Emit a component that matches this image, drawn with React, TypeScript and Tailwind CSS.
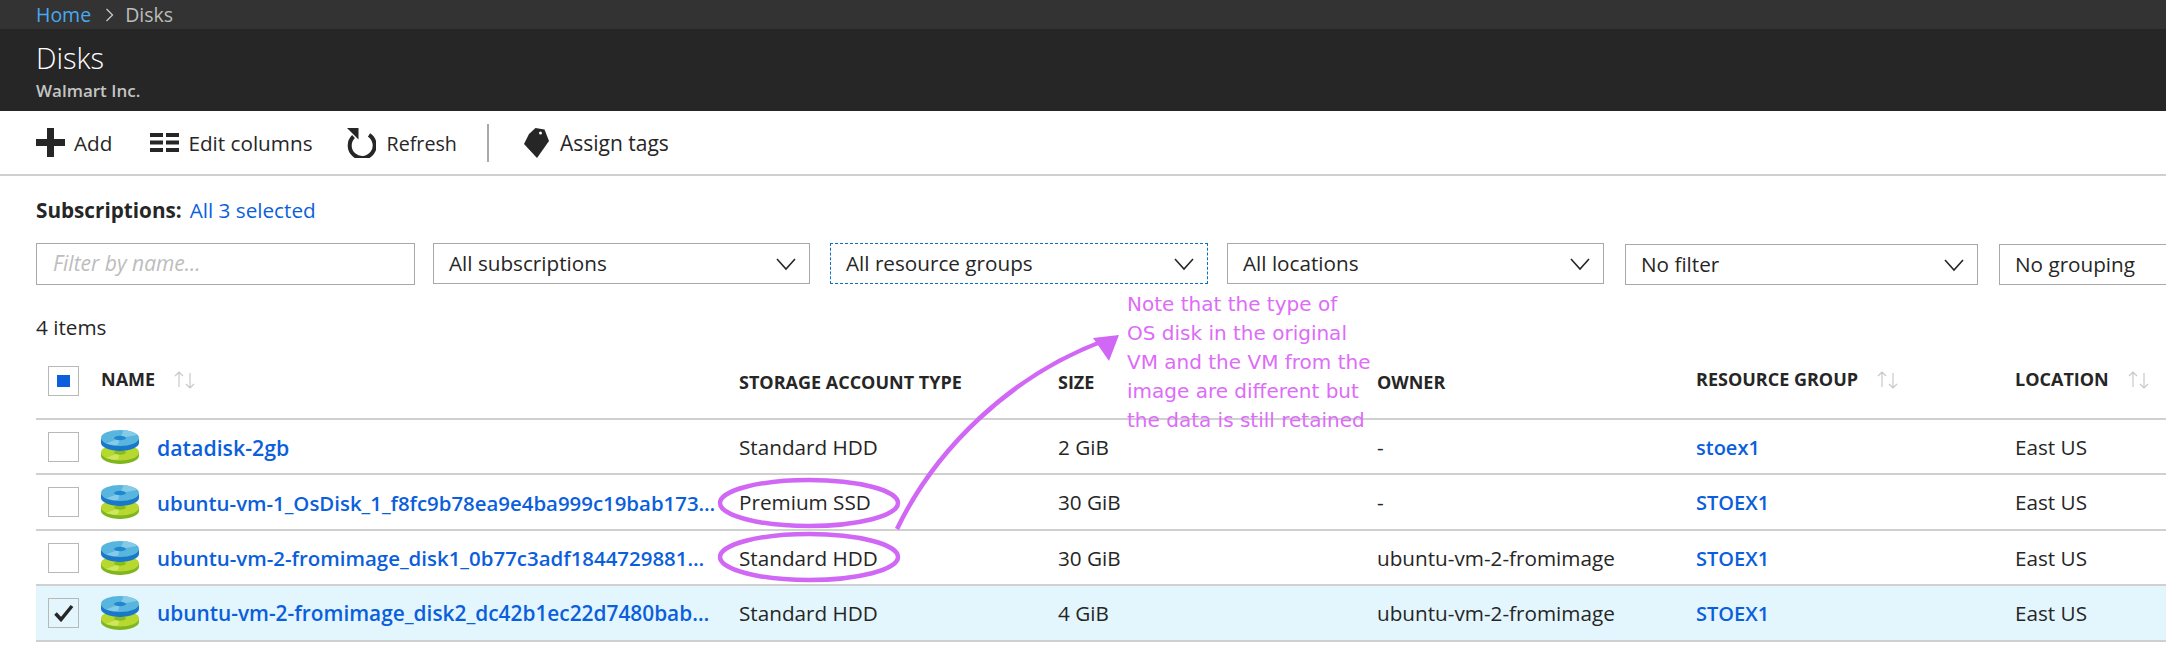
const rows = [
  { name: "datadisk-2gb", type: "Standard HDD", size: "2 GiB", owner: "-", rg: "stoex1", h: "h-[55px]", fs: "text-[21.300px]" },
  { name: "ubuntu-vm-1_OsDisk_1_f8fc9b78ea9e4ba999c19bab173…", type: "Premium SSD", size: "30 GiB", owner: "-", rg: "STOEX1", h: "h-[56px]", fs: "text-[20.400px]" },
  { name: "ubuntu-vm-2-fromimage_disk1_0b77c3adf1844729881…", type: "Standard HDD", size: "30 GiB", owner: "ubuntu-vm-2-fromimage", rg: "STOEX1", h: "h-[55px]", fs: "text-[20.450px]" },
  { name: "ubuntu-vm-2-fromimage_disk2_dc42b1ec22d7480bab…", type: "Standard HDD", size: "4 GiB", owner: "ubuntu-vm-2-fromimage", rg: "STOEX1", h: "h-[56px]", selected: true, fs: "text-[20.850px]" },
];

const noteLines = [
  "Note that the type of",
  "OS disk in the original",
  "VM and the VM from the",
  "image are different but",
  "the data is still retained",
];

function Chevron() {
  return (
    <svg width="20" height="14" viewBox="0 0 20 14" fill="none" stroke="#262626" strokeWidth="1.6">
      <path d="M1 2l9 10 9-10" />
    </svg>
  );
}

function Sort() {
  return (
    <svg width="23" height="18" viewBox="0 0 23 18" fill="none" stroke="#c8c8c8" strokeWidth="1.2">
      <path d="M6 16V1M2 5l4-4 4 4" />
      <path d="M17 2v15M13 13l4 4 4-4" />
    </svg>
  );
}

function Disk() {
  return (
    <svg width="38" height="34" viewBox="0 0 38 34" className="shrink-0">
      <path d="M0 22v4c0 4 8.500 8 19 8s19-4 19-8v-4z" fill="#7fb51e" />
      <ellipse cx="19" cy="22.500" rx="19" ry="8" fill="#b7d82e" />
      <path d="M19 22.500L5 28c3 1 8 2 12 1.500z" fill="#cfe65f" />
      <ellipse cx="19" cy="22.500" rx="6" ry="2.200" fill="#86bc1f" />
      <path d="M0 9v4c0 4 8.500 8 19 8s19-4 19-8V9z" fill="#1a78c8" />
      <ellipse cx="19" cy="8" rx="19" ry="8" fill="#58b5de" />
      <path d="M19 8L5 13.500c3 1 8 2 12 1.500zM19 8l4-8c6 .500 11 2.500 13 5z" fill="#85cbe8" />
      <ellipse cx="19" cy="8" rx="6" ry="2.200" fill="#1f86d0" />
    </svg>
  );
}

function Select({ label, className, focus }: { label: string; className: string; focus?: boolean }) {
  return (
    <div
      className={`flex h-[41px] shrink-0 items-center justify-between pl-[15px] pr-[13px] ${
        focus ? "border border-dashed border-[#0b6fc4]" : "border border-[#a9a9a9]"
      } ${className}`}
    >
      <span>{label}</span>
      <Chevron />
    </div>
  );
}

function Head({ label, sort }: { label: string; sort?: boolean }) {
  return (
    <div className={`flex items-center gap-[18px] text-[18px] font-bold text-[#262626] ${sort ? "mb-[2px]" : "mt-[4px]"}`}>
      <span>{label}</span>
      {sort && <Sort />}
    </div>
  );
}

function Box({ checked, mixed }: { checked?: boolean; mixed?: boolean }) {
  return (
    <div className="ml-[12px] flex h-[30px] w-[31px] items-center justify-center border border-[#b8b8b8]">
      {mixed && <div className="h-[12px] w-[13px] bg-[#0b5fdc]" />}
      {checked && (
        <svg width="20" height="18" viewBox="0 0 20 18" fill="none" stroke="#262626" strokeWidth="3.500">
          <path d="M1.500 9.500l5.500 6L18 2" />
        </svg>
      )}
    </div>
  );
}

export default function App() {
  return (
    <div className="relative h-[664px] w-[2166px] overflow-hidden bg-white font-['Open_Sans',sans-serif] text-[20.7px] text-[#262626]">
      <div className="flex h-[29px] items-center bg-[#333333] pl-[36px] text-[19.500px]">
        <span className="text-[#4aa8ee]">Home</span>
        <svg className="ml-[14px]" width="9" height="14" viewBox="0 0 9 14" fill="none" stroke="#c8c8c8" strokeWidth="1.300">
          <path d="M1.500 1l6 6-6 6" />
        </svg>
        <span className="ml-[11px] text-[#bdbdbd]">Disks</span>
      </div>
      <div className="flex h-[82px] flex-col bg-[#262626] pl-[36px]">
        <div className="mt-[7px] text-[29px] leading-[44px] font-light text-white">Disks</div>
        <div className="mt-[1px] text-[17px] leading-[20px] font-semibold text-[#c4c4c4]">Walmart Inc.</div>
      </div>

      <div className="flex h-[65px] items-center border-b-2 border-[#d0d0d0] pl-[36px]">
        <svg width="29" height="29" viewBox="0 0 29 29" fill="#262626"><path d="M11 0h7v11h11v7H18v11h-7V18H0v-7h11z" /></svg>
        <span className="ml-[9px] pt-[2px]">Add</span>
        <svg className="ml-[38px]" width="29" height="19" viewBox="0 0 29 19" fill="#262626">
          <path d="M0 0h13v4H0zM16 0h13v4H16zM0 7.500h13v4H0zM16 7.500h13v4H16zM0 15h13v4H0zM16 15h13v4H16z" />
        </svg>
        <span className="ml-[9px] pt-[2px]">Edit columns</span>
        <svg className="ml-[33px]" width="30" height="30" viewBox="0 0 30 30" fill="none">
          <path d="M7.500 8.500a12.500 12.500 0 1 0 15.500-1.500" stroke="#262626" strokeWidth="4" />
          <path d="M1 0h11.500v11.500z" fill="#262626" />
        </svg>
        <span className="ml-[11px] pt-[2px] text-[19.700px]">Refresh</span>
        <div className="ml-[30px] h-[38px] w-[2px] bg-[#a9a9a9]" />
        <svg className="ml-[35px]" width="25" height="30" viewBox="0 0 25 30" fill="#262626">
          <path d="M11.500 0l9 1.500L25 13l-12 17L0 16 5 6z" />
          <circle cx="16.500" cy="5" r="1.500" fill="#ffffff" />
        </svg>
        <span className="ml-[11px] pt-[2px] text-[21px]">Assign tags</span>
      </div>

      <div className="mt-[21px] flex h-[28px] items-center pl-[36px]">
        <span className="font-bold">Subscriptions:</span>
        <span className="ml-[8px] text-[#0b5fdc]">All 3 selected</span>
      </div>

      <div className="mt-[18px] flex items-start pl-[36px]">
        <div className="flex h-[42px] w-[379px] shrink-0 items-center border border-[#a9a9a9] pl-[16px] text-[21px] text-[#bdbdbd] italic">Filter by name...</div>
        <Select label="All subscriptions" className="ml-[18px] w-[377px]" />
        <Select label="All resource groups" className="ml-[20px] w-[378px]" focus />
        <Select label="All locations" className="ml-[19px] w-[377px]" />
        <Select label="No filter" className="ml-[21px] mt-[1px] w-[353px]" />
        <Select label="No grouping" className="ml-[21px] mt-[1px] w-[300px]" />
      </div>

      <div className="mt-[28px] h-[28px] pl-[36px] leading-[28px]">4 items</div>

      <div className="ml-[36px]">
        <div className="mt-[2px] grid h-[77px] grid-cols-[65px_638px_319px_319px_319px_319px_1fr] items-center border-b-2 border-[#d0d0d0]">
          <Box mixed />
          <Head label="NAME" sort />
          <Head label="STORAGE ACCOUNT TYPE" />
          <Head label="SIZE" />
          <Head label="OWNER" />
          <Head label="RESOURCE GROUP" sort />
          <Head label="LOCATION" sort />
        </div>
        {rows.map((r) => (
          <div
            key={r.name}
            className={`grid ${r.h} grid-cols-[65px_638px_319px_319px_319px_319px_1fr] items-center border-b-2 border-[#d0d0d0] ${
              r.selected ? "bg-[#e3f6fd]" : ""
            }`}
          >
            <Box checked={r.selected} />
            <div className="flex items-center">
              <Disk />
              <span className={`ml-[18px] pt-[2px] ${r.fs} font-semibold whitespace-nowrap text-[#0b5fdc]`}>{r.name}</span>
            </div>
            <div className="pt-[2px]">{r.type}</div>
            <div className="pt-[2px]">{r.size}</div>
            <div className="pt-[2px]">{r.owner}</div>
            <div className="pt-[2px] text-[20px] font-semibold text-[#0b5fdc]">{r.rg}</div>
            <div className="pt-[2px]">East US</div>
          </div>
        ))}
      </div>

      <svg className="absolute top-[320px] left-[710px]" width="430" height="270" viewBox="0 0 430 270" fill="none">
        <ellipse cx="99" cy="183" rx="89" ry="23" stroke="#d068f5" strokeWidth="4.500" />
        <ellipse cx="99" cy="237" rx="89" ry="23" stroke="#d068f5" strokeWidth="4.500" />
        <path d="M187 209C225 130 300 55 396 20" stroke="#d068f5" strokeWidth="4.500" />
        <path d="M409 15l-10 26-16-23z" fill="#d068f5" />
      </svg>

      <div className="absolute top-[290px] left-[1127px] font-['DejaVu_Sans',sans-serif] text-[20px] leading-[29px] whitespace-nowrap text-[#dd6cf8]">
        {noteLines.map((l) => (
          <div key={l}>{l}</div>
        ))}
      </div>
    </div>
  );
}
